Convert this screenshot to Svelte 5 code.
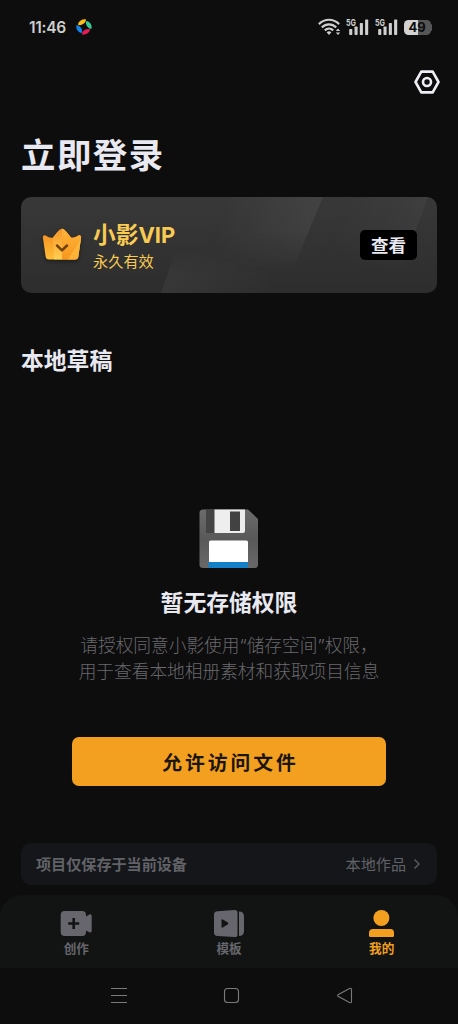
<script>
    const title = '立即登录';
    const bars = [6, 8.5, 12, 15.5];

    let active = 'mine';

    const tabs = [
      { id: 'create', name: '创作' },
      { id: 'template', name: '模板' },
      { id: 'mine', name: '我的' }
    ];
</script>

<div class="screen">
    <div class="status">
        <span class="time">11:46</span>
        <svg class="app-dot" width="16" height="16" viewBox="0 0 16 16">
            <path d="M1.8 5.6 C2.8 1.8 6 -.1 9.8 .3 C10.6 2.6 7.6 6 3.6 6.3 Z" fill="#fbbd1c" />
            <path d="M10.4 1.9 C14.2 2.6 16.2 6 15.5 9.8 C12.8 10.4 9.6 6.4 9.9 3.4 Z" fill="#36c994" />
            <path d="M14.3 10.6 C13.2 14.3 9.8 16.1 6 15.6 C5.4 13.2 8.2 10 12.2 9.9 Z" fill="#e51b55" />
            <path d="M5.7 14.1 C1.8 13.4 -.2 10 .4 6.3 C3.3 5.9 6.4 9.6 6.1 12.6 Z" fill="#1583e8" />
        </svg>

        <div class="signals">
            <svg width="23" height="18" viewBox="0 0 23 18" fill="none" stroke="#cfcfcf" stroke-width="2.2">
                <path d="M.9 6.1 C6.8 .3 15.2 .3 21.1 6.1" />
                <path d="M3.8 9.4 C8 5.3 14 5.3 18.2 9.4" />
                <path d="M6.8 12.4 C9.2 10.1 12.8 10.1 15.2 12.4" />
                <path d="M8.6 14.2 Q11 12.4 13.4 14.2 L11 17 Z" fill="#cfcfcf" stroke="none" />
                <path d="M20 10.4 L22.2 13 H17.8 Z M20 17 L22.2 14.4 H17.8 Z" fill="#cfcfcf" stroke="none" />
            </svg>
            {#each [1, 2] as sim}
                <svg class="sim" width="23" height="18" viewBox="0 0 23 18">
                    <text x="0" y="8" textLength="10" lengthAdjust="spacingAndGlyphs">5G</text>
                    {#each bars as h, i}
                        <rect x={3.2 + i * 5.3} y={17 - h} width="3.1" height={h} rx=".7" fill="#cfcfcf" />
                    {/each}
                </svg>
            {/each}
            <div class="battery"><span>49</span></div>
            <i class="nub"></i>
        </div>
    </div>

    <div class="toolbar">
        <svg width="26" height="24" viewBox="0 0 26 24" fill="none" stroke="#eeeef4" stroke-width="2.6" stroke-linejoin="round">
            <path d="M7.3 1.6 H18.7 L24.5 12 L18.7 22.4 H7.3 L1.5 12 Z" />
            <circle cx="13" cy="12" r="4" />
        </svg>
    </div>

    <h1>{title}</h1>

    <div class="vip">
        <svg class="shine" width="416" height="96" viewBox="0 0 416 96">
            <defs>
                <linearGradient id="beam" gradientUnits="userSpaceOnUse" x1="200" x2="292" y1="0" y2="32">
                    <stop offset="0" stop-color="#fff" stop-opacity="0" />
                    <stop offset="1" stop-color="#fff" stop-opacity=".06" />
                </linearGradient>
                <linearGradient id="beam2" gradientUnits="userSpaceOnUse" x1="320" x2="398" y1="0" y2="28">
                    <stop offset="0" stop-color="#fff" stop-opacity="0" />
                    <stop offset="1" stop-color="#fff" stop-opacity=".035" />
                </linearGradient>
                <linearGradient id="low" gradientUnits="userSpaceOnUse" x1="145" x2="250" y1="80" y2="80">
                    <stop offset="0" stop-color="#fff" stop-opacity=".045" />
                    <stop offset="1" stop-color="#fff" stop-opacity=".005" />
                </linearGradient>
                <linearGradient id="fade" x1="0" x2="0" y1="0" y2="1">
                    <stop offset="0" stop-color="#fff" />
                    <stop offset=".35" stop-color="#fff" />
                    <stop offset=".8" stop-color="#000" />
                </linearGradient>
                <linearGradient id="rise" gradientUnits="userSpaceOnUse" x1="0" x2="0" y1="50" y2="80">
                    <stop offset="0" stop-color="#000" />
                    <stop offset="1" stop-color="#fff" />
                </linearGradient>
                <mask id="fadeMask"><rect width="416" height="96" fill="url(#fade)" /></mask>
                <mask id="riseMask"><rect width="416" height="96" fill="url(#rise)" /></mask>
            </defs>
            <path d="M150 0 H302 L262 96 H150 Z" fill="url(#beam)" mask="url(#fadeMask)" />
            <path d="M140 96 L156 50 H260 V96 Z" fill="url(#low)" mask="url(#riseMask)" />
            <path d="M300 0 H407 L372 96 H300 Z" fill="url(#beam2)" mask="url(#fadeMask)" />
        </svg>
        <svg class="crown" width="40" height="34" viewBox="0 0 40 34">
            <defs>
                <linearGradient id="goldL" x1="0" x2="0" y1="0" y2="1">
                    <stop offset="0" stop-color="#f28a22" />
                    <stop offset="1" stop-color="#ffbf36" />
                </linearGradient>
                <linearGradient id="goldR" x1="0" x2="0" y1="0" y2="1">
                    <stop offset="0" stop-color="#ffb43c" />
                    <stop offset="1" stop-color="#f7971c" />
                </linearGradient>
                <linearGradient id="goldM" x1="0" x2="0" y1="0" y2="1">
                    <stop offset="0" stop-color="#f79a2a" />
                    <stop offset="1" stop-color="#ffd45b" />
                </linearGradient>
            </defs>
            <path d="M.9 9.8 C.6 7.4 2.4 6.6 4 7.7 Q8.5 10.8 11 9.4 L15.4 4 Q20 -1.6 24.6 4 L29 9.4 Q31.5 10.8 36 7.7 C37.6 6.6 39.4 7.4 39.1 9.8 L36.3 29 Q35.8 31.5 33 31.5 H7 Q4.2 31.5 3.7 29 Z" fill="url(#goldL)" />
            <path d="M11 9.4 L15.4 4 Q17.8 1 20 .6 V31.5 H12 Z" fill="url(#goldM)" opacity=".75" />
            <path d="M20 .6 Q22.2 1 24.6 4 L29 9.4 Q31.5 10.8 36 7.7 C37.6 6.6 39.4 7.4 39.1 9.8 L36.3 29 Q35.8 31.5 33 31.5 H20 Z" fill="url(#goldR)" />
            <path d="M38.8 11 L36.3 29 Q35.8 31.5 33 31.5 H26 Z" fill="#ffc246" opacity=".6" />
            <path d="M15 17.5 L20 22.3 L25 17.5" fill="none" stroke="#71400b" stroke-width="2.5" stroke-linecap="round" stroke-linejoin="round" />
        </svg>
        <div class="vip-text">
            <div class="vip-name">小影<span>VIP</span></div>
            <div class="vip-sub">永久有效</div>
        </div>
        <button class="view">查看</button>
    </div>

    <h2>本地草稿</h2>

    <div class="empty">
        <svg width="60" height="60" viewBox="0 0 60 60">
            <defs>
                <linearGradient id="disk" x1="0" x2="0" y1="0" y2="1">
                    <stop offset="0" stop-color="#6c6c6c" />
                    <stop offset=".5" stop-color="#595959" />
                    <stop offset="1" stop-color="#686868" />
                </linearGradient>
            </defs>
            <path d="M4 .5 H49 L59 10 V55.5 Q59 59 55.5 59 H4 Q.5 59 .5 55.5 V4 Q.5 .5 4 .5 Z" fill="url(#disk)" />
            <rect x="7" y=".5" width="9" height="23.5" fill="#444" />
            <path d="M15.5 .5 H46 V22 Q46 24 44 24 H15.5 Z" fill="#eee" />
            <rect x="31" y="2.5" width="10" height="19.5" fill="#424242" />
            <path d="M10 33 Q10 31.5 11.5 31.5 H47.5 Q49 31.5 49 33 V54 H10 Z" fill="#fff" />
            <rect x="9.5" y="53" width="39.5" height="6" fill="#1480c8" />
        </svg>
        <h3>暂无存储权限</h3>
        <p>请授权同意小影使用“储存空间”权限，<br />用于查看本地相册素材和获取项目信息</p>
        <button class="allow">允许访问文件</button>
    </div>

    <div class="works">
        <b>项目仅保存于当前设备</b>
        <span>本地作品</span>
        <svg width="8" height="12" viewBox="0 0 8 12" fill="none" stroke="#56565b" stroke-width="1.6">
            <path d="M1.5 1.5 L6 6 L1.5 10.5" />
        </svg>
    </div>

    <nav class="tabs">
        {#each tabs as tab}
            <button class="tab" class:active={active === tab.id} on:click={() => (active = tab.id)}>
                {#if tab.id === 'create'}
                    <svg width="32" height="28" viewBox="-.7 0 32 28">
                        <path d="M4 1 H21.5 Q25.3 1 25.3 5 V6.5 L28.6 4.6 Q31 3.6 31 6 V20.8 Q31 23.3 28.6 22.3 L25.3 20.6 V22 Q25.3 26 21.5 26 H4 Q0 26 0 22 V5 Q0 1 4 1 Z" fill="currentColor" />
                        <path d="M13 8 V19 M7.5 13.5 H18.5" stroke="#111413" stroke-width="2.6" />
                    </svg>
                {:else if tab.id === 'template'}
                    <svg width="30" height="28" viewBox="0 0 30 28">
                        <path d="M3.5 1.2 L20.5 .1 Q23.5 0 23.5 2.8 V24.4 Q23.5 27.2 20.5 27 L3.5 26 Q0 25.7 0 22.5 V4.7 Q0 1.5 3.5 1.2 Z" fill="currentColor" />
                        <path d="M25 1.4 Q30 1.4 30 6.5 V21 Q30 26 25 26 Z" fill="currentColor" />
                        <path d="M7.5 10.2 Q7.5 8.8 8.8 9.5 L13.8 12.6 Q14.9 13.4 13.8 14.2 L8.8 17.5 Q7.5 18.2 7.5 16.8 Z" fill="#111413" />
                    </svg>
                {:else}
                    <svg width="26" height="28" viewBox="0 0 26 28" fill="currentColor">
                        <circle cx="12.4" cy="8" r="8" />
                        <path d="M4 19 H21.5 Q25 19 25 23 V25.5 Q25 27 23.5 27 H1.5 Q0 27 0 25.5 V23 Q0 19 4 19 Z" />
                    </svg>
                {/if}
                <span>{tab.name}</span>
            </button>
        {/each}
    </nav>

    <div class="system">
        <svg width="18" height="18" viewBox="0 0 18 18"><path d="M1 1.5 H17 M1 8.5 H17 M1 15.5 H17" /></svg>
        <svg width="18" height="18" viewBox="0 0 18 18"><rect x="1.5" y="1.5" width="14" height="14" rx="3" /></svg>
        <svg width="18" height="18" viewBox="0 0 18 18"><path d="M2 7.7 Q1.2 8.5 2 9.3 L13.5 15.6 Q15.5 16.3 15.5 14.5 V2.5 Q15.5 .8 13.5 1.5 Z" /></svg>
    </div>
</div>

<style>
    :global(body) {
      background: #0d0d0d;
    }

    .screen {
      width: 458px;
      height: 1024px;
      overflow: hidden;
      display: flex;
      flex-direction: column;
      background: #0d0d0d;
      color: #e9e9f1;
      font-family: "Noto Sans CJK SC", sans-serif;
    }

    button {
      border: none;
      padding: 0;
      font-family: inherit;
      cursor: pointer;
    }

    h1, h2, h3, p {
      margin: 0;
    }

    .status {
      height: 54px;
      flex: none;
      display: flex;
      align-items: center;
      box-sizing: border-box;
      padding: 0 26px 0 29px;
      font-family: Inter, sans-serif;
    }

    .time {
      width: 47px;
      font-size: 15.5px;
      font-weight: 600;
      letter-spacing: -0.3px;
      color: #cfcfcf;
    }

    .signals {
      display: flex;
      align-items: center;
      margin-left: auto;
    }

    .sim {
      margin-left: 5.5px;
    }

    .sim text {
      font-size: 9.6px;
      font-weight: 700;
      fill: #cfcfcf;
    }

    .battery {
      width: 27px;
      height: 15px;
      margin-left: 6px;
      border-radius: 4.5px;
      background: linear-gradient(90deg, #d2d2d2 52%, #565656 52%);
      color: #0d0d0d;
      font-size: 13px;
      font-weight: 700;
      line-height: 15px;
      text-align: center;
    }

    .nub {
      width: 1.5px;
      height: 7px;
      border-radius: 0 2px 2px 0;
      background: #565656;
    }

    .toolbar {
      height: 56px;
      flex: none;
      display: flex;
      align-items: center;
      justify-content: flex-end;
      padding-right: 18px;
    }

    h1 {
      height: 87px;
      flex: none;
      padding-left: 21px;
      font-size: 34.4px;
      line-height: 87px;
      letter-spacing: 1.5px;
    }

    .vip {
      position: relative;
      width: 416px;
      height: 96px;
      flex: none;
      box-sizing: border-box;
      display: flex;
      align-items: center;
      margin-left: 21px;
      padding: 0 20px 0 21px;
      border-radius: 10px;
      overflow: hidden;
      background: linear-gradient(#383838, #2d2d2d);
    }

    .shine {
      position: absolute;
      top: 0;
      left: 0;
    }

    .crown {
      filter: drop-shadow(0 2px 2px rgba(0, 0, 0, 0.4));
    }

    .vip-text {
      margin-left: 11px;
      color: #f8cb52;
    }

    .vip-name {
      height: 29px;
      font-size: 22.7px;
      font-weight: 700;
      line-height: 29px;
    }

    .vip-name span {
      font-family: Inter, sans-serif;
      font-size: 22px;
    }

    .vip-sub {
      height: 24px;
      font-size: 15.2px;
      line-height: 24px;
    }

    .view {
      position: relative;
      width: 57px;
      height: 30px;
      margin-left: auto;
      border-radius: 5px;
      background: #000;
      color: #e9e9f1;
      font-size: 17.5px;
      font-weight: 700;
      line-height: 30px;
    }

    h2 {
      margin-top: 51px;
      height: 32px;
      flex: none;
      padding-left: 21px;
      font-size: 22.8px;
      line-height: 32px;
    }

    .empty {
      height: 410px;
      flex: none;
      display: flex;
      flex-direction: column;
      align-items: center;
      padding-top: 133px;
      box-sizing: border-box;
      margin-bottom: 57px;
    }

    h3 {
      margin-top: 16px;
      font-size: 22.8px;
      line-height: 34px;
    }

    p {
      margin-top: 14px;
      color: #69696d;
      font-family: Inter, "Noto Sans CJK SC", sans-serif;
      font-size: 17.7px;
      font-weight: 300;
      line-height: 26px;
      text-align: center;
      white-space: nowrap;
    }

    .allow {
      width: 314px;
      height: 49px;
      flex: none;
      margin-top: 52px;
      border-radius: 7px;
      background: #f3a021;
      color: #1a1508;
      font-size: 19.8px;
      font-weight: 700;
      letter-spacing: 3px;
      text-indent: 3px;
    }

    .works {
      width: 416px;
      height: 42px;
      flex: none;
      display: flex;
      align-items: center;
      box-sizing: border-box;
      margin: 0 0 10px 21px;
      padding: 0 16px 0 15px;
      border-radius: 10px;
      background: #141619;
      color: #626368;
      font-size: 15.1px;
    }

    .works b,
    .works span {
      padding-bottom: 2px;
    }

    .works span {
      margin-left: auto;
      margin-right: 7px;
    }

    .tabs {
      height: 73px;
      flex: none;
      display: grid;
      grid-template-columns: repeat(3, 1fr);
      border-radius: 22px 22px 0 0;
      background: #111413;
    }

    .tab {
      display: flex;
      flex-direction: column;
      align-items: center;
      padding-top: 15px;
      background: none;
      color: #66666c;
      font-size: 12.6px;
      font-weight: 700;
      line-height: 20px;
    }

    .tab.active {
      color: #f3a021;
    }

    .system {
      flex: 1;
      display: flex;
      justify-content: center;
      align-items: center;
      gap: 95px;
      padding-left: 6px;
    }

    .system svg {
      fill: none;
      stroke: #7a7a7a;
      stroke-width: 1.1;
    }
</style>
